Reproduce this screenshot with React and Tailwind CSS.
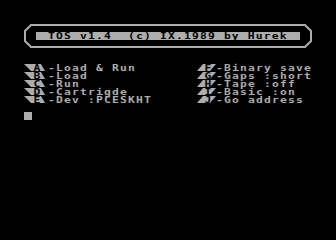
const leftItems = [
  { k: "A", t: "-Load & Run" },
  { k: "B", t: "-Load" },
  { k: "C", t: "-Run" },
  { k: "D", t: "-Cartrigde" },
  { k: "E", t: "-Dev :PCESKHT" },
];

const rightItems = [
  { k: "F", t: "-Binary save" },
  { k: "G", t: "-Gaps :short" },
  { k: "H", t: "-Tape :off" },
  { k: "I", t: "-Basic :on" },
  { k: "J", t: "-Go address" },
];

// slanted key cap, drawn like the ATASCII triangles round an inverse letter
function Key({ k, side }) {
  const pts = side === "left" ? "0,0 17,0 21,7 7,7" : "11,0 24,0 18,7 5,7";
  return (
    <span className="relative flex w-[24px] h-[8px] shrink-0 overflow-hidden">
      <svg width="24" height="8" className="absolute left-0 top-0">
        <polygon points={pts} fill="#adadad" />
      </svg>
      <span
        className={
          side === "left"
            ? "relative ml-[9px] w-[8px] h-[8px] text-center text-black tracking-normal scale-x-[1.333]"
            : "relative ml-[12px] w-[8px] h-[8px] text-center text-black tracking-normal scale-x-[1.333]"
        }
      >
        {k}
      </span>
    </span>
  );
}

function Txt({ children }) {
  return (
    <span className="inline-block h-[8px] origin-left scale-x-[1.333] whitespace-pre tracking-[0.88px]">
      {children}
    </span>
  );
}

function Row({ k, t, side }) {
  return (
    <div className="flex h-[8px] items-start">
      <Key k={k} side={side} />
      <Txt>{t}</Txt>
    </div>
  );
}

export default function App() {
  return (
    <div
      className="w-[336px] h-[240px] bg-black text-[#adadad] overflow-hidden pt-[24px] text-[8.5px] leading-[8px] font-bold"
      style={{ fontFamily: '"DejaVu Sans Mono", "Liberation Mono", monospace' }}
    >
      {/* title box */}
      <div className="relative ml-[24px] w-[288px] h-[24px] pt-[8px]">
        <svg width="288" height="24" className="absolute left-0 top-0">
          <polygon
            points="7,1 281,1 287,7 287,17 281,23 7,23 1,17 1,7"
            fill="none"
            stroke="#adadad"
            strokeWidth="2"
          />
        </svg>
        <div className="relative ml-[12px] w-[264px] h-[8px] bg-[#adadad] text-black pl-[12px]">
          <Txt>TOS v1.4  (c) IX.1989 by Hurek</Txt>
        </div>
      </div>

      {/* menu */}
      <div className="mt-[16px] flex">
        <div className="ml-[24px] w-[168px] flex flex-col">
          {leftItems.map((it) => (
            <Row key={it.k} k={it.k} t={it.t} side="left" />
          ))}
        </div>
        <div className="w-[120px] flex flex-col">
          {rightItems.map((it) => (
            <Row key={it.k} k={it.k} t={it.t} side="right" />
          ))}
        </div>
      </div>

      {/* cursor */}
      <div className="mt-[8px] ml-[24px] w-[8px] h-[8px] bg-[#adadad]" />
    </div>
  );
}
